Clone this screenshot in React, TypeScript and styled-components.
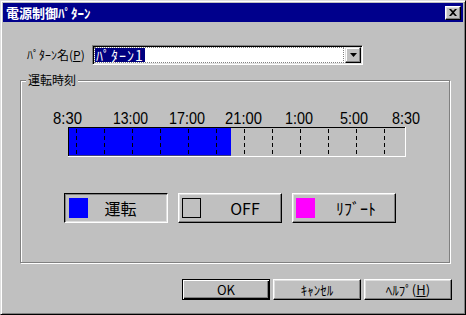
import styled, { createGlobalStyle } from 'styled-components'

const GlobalStyle = createGlobalStyle`
  html, body {
    margin: 0;
    padding: 0;
    background: #c0c0c0;
  }
  body {
    font-family: "Noto Sans CJK JP", "DejaVu Sans", sans-serif;
    color: #000;
  }
`

const Dialog = styled.div`
  box-sizing: border-box;
  width: 466px;
  height: 315px;
  background: #c0c0c0;
  border: 1px solid;
  border-color: #dfdfdf #000 #000 #dfdfdf;
  box-shadow: inset 1px 1px #fff, inset -1px -1px #808080;
  padding: 2px;
  display: flex;
  flex-direction: column;
`

const TitleBar = styled.div`
  height: 19px;
  background: #00008c;
  display: flex;
  align-items: center;
  justify-content: space-between;
  padding: 0 2px 0 3px;
`

const Title = styled.span`
  color: #fff;
  font-size: 13px;
  font-weight: bold;
  line-height: 19px;
`

const CloseButton = styled.div`
  box-sizing: border-box;
  width: 16px;
  height: 14px;
  background: #c0c0c0;
  border: 1px solid;
  border-color: #fff #000 #000 #fff;
  box-shadow: inset -1px -1px #808080, inset 1px 1px #dfdfdf;
  display: flex;
  align-items: center;
  justify-content: center;
`

const Body = styled.div`
  flex: 1;
  display: flex;
  flex-direction: column;
  padding: 0 11px 0 17px;
`

const PatternRow = styled.div`
  display: flex;
  align-items: center;
  margin-top: 23px;
  padding-left: 7px;
`

const FieldLabel = styled.span`
  width: 65px;
  font-size: 12px;
  line-height: 16px;
`

const Combo = styled.div`
  box-sizing: border-box;
  width: 271px;
  height: 20px;
  background: #fff;
  border: 1px solid;
  border-color: #808080 #fff #fff #808080;
  box-shadow: inset 1px 1px #000, inset -1px -1px #dfdfdf;
  padding: 1px;
  display: flex;
`

const ComboEdit = styled.div`
  flex: 1;
  display: flex;
  align-items: center;
  border: 1px dotted #808080;
  margin-right: 1px;
`

const Selected = styled.span`
  background: #000080;
  color: #fff;
  font-size: 14px;
  letter-spacing: 1px;
  line-height: 14px;
  padding: 0 1px;
`

const DropButton = styled.div`
  box-sizing: border-box;
  width: 16px;
  height: 16px;
  background: #c0c0c0;
  border: 1px solid;
  border-color: #dfdfdf #000 #000 #dfdfdf;
  box-shadow: inset -1px -1px #808080, inset 1px 1px #fff;
  display: flex;
  align-items: center;
  justify-content: center;
`

const GroupBox = styled.div`
  box-sizing: border-box;
  position: relative;
  width: 430px;
  height: 183px;
  margin-top: 15px;
  border: 1px solid #808080;
  box-shadow: 1px 1px 0 #fff, inset 1px 1px 0 #fff;
  display: flex;
  flex-direction: column;
`

const GroupTitle = styled.span`
  position: absolute;
  top: -9px;
  left: 5px;
  padding: 0 2px;
  background: #c0c0c0;
  font-size: 12px;
  line-height: 16px;
`

const Timeline = styled.svg`
  display: block;
  margin-top: 24px;
`

const LegendRow = styled.div`
  display: flex;
  gap: 10px;
  margin-top: 32px;
  padding-left: 43px;
`

const LegendButton = styled.div<{ $pressed?: boolean }>`
  box-sizing: border-box;
  width: 104px;
  height: 30px;
  display: flex;
  align-items: center;
  padding-left: ${(p) => (p.$pressed ? 4 : 3)}px;
  border: 1px solid;
  border-color: ${(p) => (p.$pressed ? '#000 #fff #fff #000' : '#fff #000 #000 #fff')};
  box-shadow: ${(p) =>
    p.$pressed
      ? 'inset 1px 1px #808080, inset -1px -1px #dfdfdf'
      : 'inset -1px -1px #808080, inset 1px 1px #dfdfdf'};
`

const Swatch = styled.span<{ $color?: string }>`
  box-sizing: border-box;
  width: 19px;
  height: 20px;
  flex: none;
  background: ${(p) => p.$color ?? 'transparent'};
  border: ${(p) => (p.$color ? 'none' : '1px solid #000')};
`

const LegendText = styled.span<{ $offset: number }>`
  flex: 1;
  text-align: center;
  font-size: 16px;
  line-height: 20px;
  padding-left: ${(p) => Math.max(0, p.$offset * 2)}px;
  padding-right: ${(p) => Math.max(0, -p.$offset * 2)}px;
`

const ButtonRow = styled.div`
  display: flex;
  justify-content: flex-end;
  gap: 3px;
  margin-top: 16px;
`

const DialogButton = styled.div<{ $default?: boolean }>`
  box-sizing: border-box;
  width: 88px;
  height: 21px;
  display: flex;
  align-items: center;
  justify-content: center;
  font-size: 13px;
  border: 1px solid;
  border-color: ${(p) => (p.$default ? '#000' : '#fff #000 #000 #fff')};
  box-shadow: ${(p) =>
    p.$default
      ? 'inset 1px 1px #fff, inset -1px -1px #000, inset -2px -2px #808080'
      : 'inset -1px -1px #808080, inset 1px 1px #dfdfdf'};
`

const times = [
  { t: '8:30', x: 67.5, w: 29 },
  { t: '13:00', x: 130.5, w: 35 },
  { t: '17:00', x: 187, w: 36 },
  { t: '21:00', x: 243.5, w: 37 },
  { t: '1:00', x: 299, w: 28 },
  { t: '5:00', x: 354, w: 28 },
  { t: '8:30', x: 406, w: 28 },
]

// x offset of the svg within the page
const ox = 21

const App = () => {
  return (
    <>
      <GlobalStyle />
      <Dialog>
        <TitleBar>
          <Title>電源制御ﾊﾟﾀｰﾝ</Title>
          <CloseButton>
            <svg width="8" height="7" viewBox="0 0 8 7">
              <path d="M0 0h2l2 2 2-2h2L5 3.5 8 7H6L4 5 2 7H0l3-3.5z" fill="#000" />
            </svg>
          </CloseButton>
        </TitleBar>
        <Body>
          <PatternRow>
            <FieldLabel>
              ﾊﾟﾀｰﾝ名(<u>P</u>)
            </FieldLabel>
            <Combo>
              <ComboEdit>
                <Selected>ﾊﾟﾀｰﾝ1</Selected>
              </ComboEdit>
              <DropButton>
                <svg width="7" height="4" viewBox="0 0 7 4">
                  <path d="M0 0h7L3.5 4z" fill="#000" />
                </svg>
              </DropButton>
            </Combo>
          </PatternRow>

          <GroupBox>
            <GroupTitle>運転時刻</GroupTitle>
            <Timeline width="428" height="56" viewBox="0 0 428 56">
              {times.map((t, i) => (
                <text
                  key={i}
                  x={t.x - ox}
                  y={19}
                  textAnchor="middle"
                  fontFamily="Liberation Sans, sans-serif"
                  fontSize="16.5"
                  textLength={t.w}
                  lengthAdjust="spacingAndGlyphs"
                  fill="#000"
                >
                  {t.t}
                </text>
              ))}
              <rect x={48} y={23} width={162} height={28} fill="#0000ff" />
              <rect x={48} y={50} width={162} height={1} fill="#404080" />
              <rect x={47} y={22} width={337} height={1} fill="#000" />
              <rect x={47} y={22} width={1} height={29} fill="#000" />
              <rect x={47} y={51} width={338} height={1} fill="#fff" />
              <rect x={384} y={22} width={1} height={30} fill="#fff" />
              {Array.from({ length: 12 }, (_, k) => (
                <line
                  key={k}
                  x1={55.5 + 28 * k}
                  x2={55.5 + 28 * k}
                  y1={24}
                  y2={51}
                  stroke="#000"
                  strokeWidth={1}
                  strokeDasharray="4 3"
                />
              ))}
            </Timeline>
            <LegendRow>
              <LegendButton $pressed>
                <Swatch $color="#0000ff" />
                <LegendText $offset={-7}>運転</LegendText>
              </LegendButton>
              <LegendButton>
                <Swatch />
                <LegendText $offset={4}>OFF</LegendText>
              </LegendButton>
              <LegendButton>
                <Swatch $color="#ff00ff" />
                <LegendText $offset={1}>ﾘﾌﾞｰﾄ</LegendText>
              </LegendButton>
            </LegendRow>
          </GroupBox>

          <ButtonRow>
            <DialogButton $default>OK</DialogButton>
            <DialogButton>ｷｬﾝｾﾙ</DialogButton>
            <DialogButton>
              ﾍﾙﾌﾟ(<u>H</u>)
            </DialogButton>
          </ButtonRow>
        </Body>
      </Dialog>
    </>
  )
}

export default App
